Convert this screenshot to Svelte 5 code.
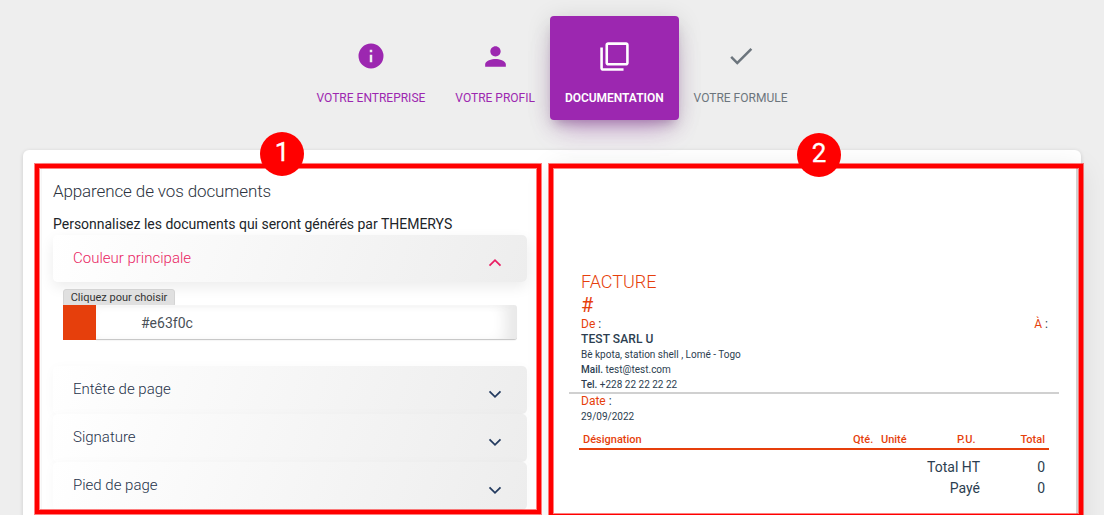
<script>
  const sections = ['Entête de page', 'Signature', 'Pied de page'];
</script>

<div class="page">
  <nav>
    <div class="step s1">
      <svg width="30" height="30" viewBox="0 0 24 24"><path d="M12 2a10 10 0 1 0 0 20 10 10 0 0 0 0-20zm1 15h-2v-6h2v6zm0-8h-2V7h2v2z"/></svg>
      <span>VOTRE ENTREPRISE</span>
    </div>
    <div class="step s2">
      <svg width="31" height="31" viewBox="0 0 24 24"><path d="M12 12c2.210 0 4-1.790 4-4s-1.790-4-4-4-4 1.790-4 4 1.790 4 4 4zm0 2c-2.670 0-8 1.340-8 4v2h16v-2c0-2.660-5.330-4-8-4z"/></svg>
      <span>VOTRE PROFIL</span>
    </div>
    <div class="step s3">
      <svg width="31" height="31" viewBox="0 0 24 24"><path d="M3 5H1v16c0 1.100.9 2 2 2h16v-2H3V5zm18-4H7c-1.100 0-2 .9-2 2v14c0 1.100.9 2 2 2h14c1.100 0 2-.9 2-2V3c0-1.100-.9-2-2-2zm0 16H7V3h14v14z"/></svg>
      <span>DOCUMENTATION</span>
    </div>
    <div class="step s4">
      <svg width="30" height="30" viewBox="0 0 24 24"><path d="M9 16.170 4.830 12l-1.420 1.410L9 19 21 7l-1.410-1.410z"/></svg>
      <span>VOTRE FORMULE</span>
    </div>
  </nav>

  <main>
    <section class="settings">
      <h2>Apparence de vos documents</h2>
      <p>Personnalisez les documents qui seront générés par THEMERYS</p>
      <div class="head open">
        <span>Couleur principale</span>
        <svg width="14" height="14" viewBox="0 0 14 14"><path d="M1.500 9.700 7 4.200l5.500 5.500"/></svg>
      </div>
      <div class="picker">
        <div class="tip">Cliquez pour choisir</div>
        <div class="field"><i></i><div class="value">#e63f0c</div></div>
      </div>
      {#each sections as name}
        <div class="head">
          <span>{name}</span>
          <svg width="14" height="14" viewBox="0 0 14 14"><path d="M1.500 4.300 7 9.800l5.500-5.500"/></svg>
        </div>
      {/each}
    </section>

    <section class="invoice">
      <div class="title">FACTURE</div>
      <div class="hash">#</div>
      <div class="parties"><div><em>De</em> :</div><div><em>À</em> :</div></div>
      <div class="company">TEST SARL U</div>
      <div class="line">Bè kpota, station shell , Lomé - Togo</div>
      <div class="line"><b>Mail.</b> test@test.com</div>
      <div class="line"><b>Tel.</b> +228 22 22 22 22</div>
      <hr />
      <div class="date"><em>Date</em> :</div>
      <div class="day">29/09/2022</div>
      <div class="cols"><span>Désignation</span><span>Qté.</span><span>Unité</span><span>P.U.</span><span>Total</span></div>
      <div class="sum first"><span>Total HT</span><span>0</span></div>
      <div class="sum"><span>Payé</span><span>0</span></div>
    </section>
  </main>

  <div class="frame f1"></div>
  <div class="frame f2"></div>
  <div class="badge b1">1</div>
  <div class="badge b2">2</div>
</div>

<style>
  :global(body) { background: #eee; }
  .page {
    position: relative; width: 1104px; height: 515px; overflow: hidden;
    background: #eee; font-family: Roboto, sans-serif; color: #2c3e50;
  }
  nav { display: flex; justify-content: center; height: 134px; padding-top: 16px; box-sizing: border-box; }
  .step {
    height: 104px; display: flex; flex-direction: column; align-items: center;
    color: #9c27b0; font-size: 12px; line-height: 16px; box-sizing: border-box;
    padding: 25px 15px 0; border-radius: 4px; white-space: nowrap;
  }
  .step svg { fill: currentColor; flex: none; display: block; }
  .step span { margin-top: auto; margin-bottom: 14px; }
  .s3 {
    background: #9c27b0; color: #fff; font-weight: 500;
    box-shadow: 0 16px 26px -10px rgba(156, 39, 176, .4), 0 4px 25px 0 rgba(0, 0, 0, .14), 0 8px 10px -5px rgba(80, 30, 90, .3);
  }
  .s3 span { font-weight: 600; letter-spacing: -.03px; }
  .s4 { color: #6c757d; }

  main {
    display: flex; width: 1058px; height: 400px; margin: 16px 0 0 23px; background: #fff;
    border-radius: 6px; box-shadow: 0 1px 4px rgba(0, 0, 0, .14);
  }
  .settings { width: 474px; margin: 14px 0 0 19px; padding: 17px 12px 0 11px; flex: none; box-shadow: 0 0 3px rgba(0, 0, 0, .1); }
  h2 { margin: 0; font-size: 17px; line-height: 20px; font-weight: 300; letter-spacing: -.12px; color: #2c3340; }
  p { margin: 15px 0 3px; font-size: 14px; line-height: 16px; letter-spacing: -.01px; color: #212529; white-space: nowrap; }
  .head {
    height: 48px; box-sizing: border-box; padding: 14px 25px 0 20px; display: flex; justify-content: space-between;
    background: linear-gradient(110deg, #fff, #ededed); border-radius: 5px;
    box-shadow: 0 2px 12px rgba(0, 0, 0, .03);
    font-size: 15px; line-height: 18px; font-weight: 300; color: #26324a;
  }
  .head svg { fill: none; stroke: #243b60; stroke-width: 1.8; margin-top: 7px; }
  .head.open { height: 47px; color: #e91e63; box-shadow: 0 5px 14px rgba(0, 0, 0, .08); }
  .head.open svg { stroke: #e91e63; }
  .picker { height: 84px; padding: 7px 10px 0; box-sizing: border-box; }
  .tip {
    width: 112px; height: 18px; margin-bottom: -2px; box-sizing: border-box; border: 1px solid #d4d4d4;
    border-radius: 3px; background: #e0e0e0; font-size: 11px; line-height: 15px; text-align: center; color: #333; white-space: nowrap;
  }
  .field { display: flex; height: 35px; }
  .field i { width: 33px; background: #e63f0c; }
  .value {
    flex: 1; box-sizing: border-box; padding-left: 45px; border-bottom: 1px solid #c8c8c8; border-radius: 0 3px 3px 0;
    background: #fff; box-shadow: inset -18px 0 14px -6px #e9e9e9, inset 0 3px 6px rgba(0,0,0,.035), 0 1px 1px rgba(0,0,0,.04);
    font-size: 14px; line-height: 36px; color: #495057;
  }

  .invoice {
    width: 529px; margin: 14px 0 0 10px; padding: 106px 15px 0 20px; box-sizing: border-box; flex: none;
    background: #fff; border-right: 2px solid #d2d2d2; box-shadow: 3px 5px 26px rgba(0, 0, 0, .1);
    font-size: 10px; line-height: 15px; white-space: nowrap;
  }
  em { font-style: normal; color: #e63f0c; }
  .invoice > div { margin-left: 12px; }
  .title { font-size: 18px; line-height: 24px; font-weight: 300; color: #e63f0c; }
  .hash { font-size: 20px; line-height: 23px; color: #e63f0c; }
  .parties { display: flex; justify-content: space-between; font-size: 12px; line-height: 14px; width: 467px; }
  .company { font-size: 12px; line-height: 16px; font-weight: 500; letter-spacing: .1px; }
  .line b { font-weight: 500; }
  hr { margin: 0; border: 0; height: 2px; background: #d0d0d0; width: 490px; }
  .date { font-size: 12px; line-height: 15px; }
  .day { line-height: 16px; }
  .cols {
    display: grid; grid-template-columns: 270px 28px 76px 40px 1fr; margin-top: 7px; height: 16px; width: 462px;
    padding: 0 4px; border-bottom: 2px solid #e63f0c; color: #e63f0c; font-weight: 500; font-size: 11px; line-height: 15px;
  }
  .invoice > .cols { margin-left: 10px; }
  .cols span:last-child { text-align: right; }
  .sum { display: grid; grid-template-columns: 399px 65px; text-align: right; font-size: 14px; line-height: 21px; }
  .first { margin-top: 7px; }

  .frame { position: absolute; box-sizing: border-box; border: 4px solid #f00; box-shadow: 0 0 0 1px rgba(255, 0, 0, .5), inset 0 0 0 1px rgba(255, 0, 0, .5); top: 164px; }
  .f1 { left: 35px; width: 506px; height: 350px; }
  .f2 { left: 549px; width: 534px; height: 354px; }
  .badge {
    position: absolute; width: 44px; height: 44px; border-radius: 50%; background: #f00; color: #fff;
    text-align: center; font-size: 26px; line-height: 41px; -webkit-text-stroke: .3px #fff;
  }
  .b1 { left: 260px; top: 132px; }
  .b2 { left: 797px; top: 133px; line-height: 40px; }
</style>
